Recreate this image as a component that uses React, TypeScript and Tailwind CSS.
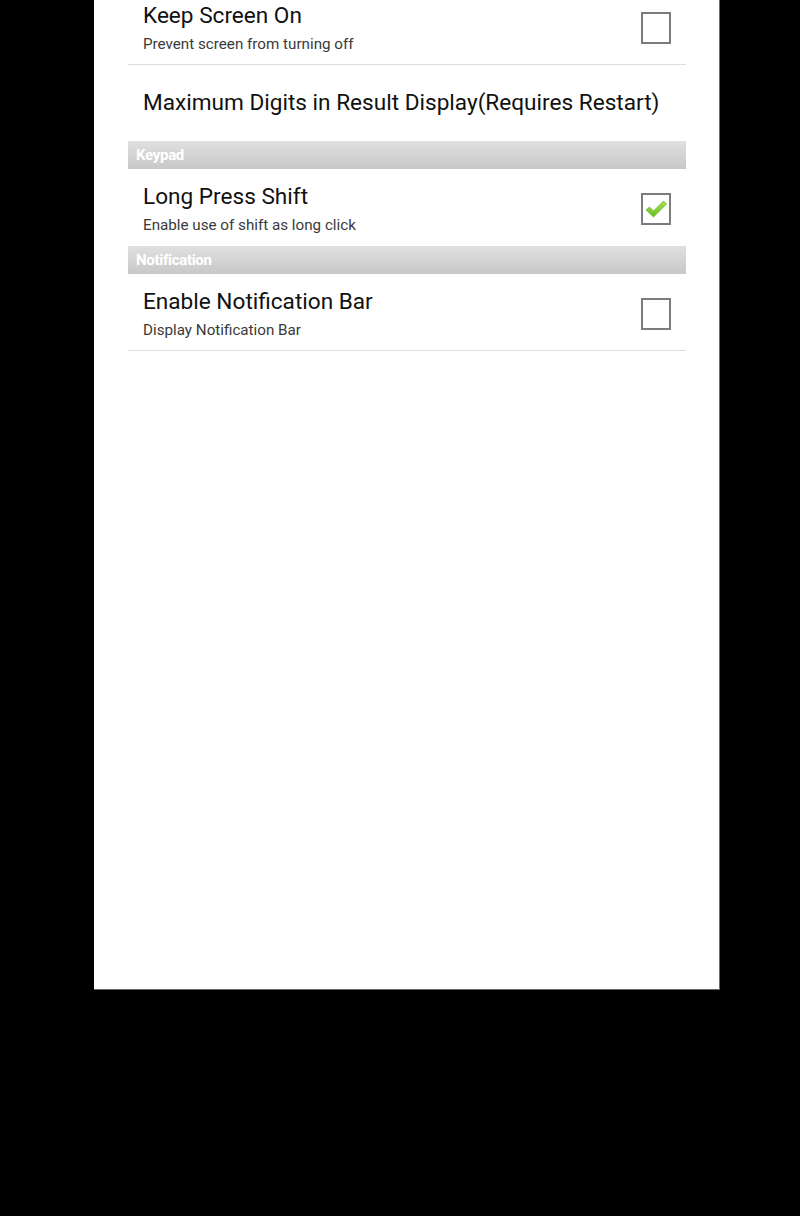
import React from "react";

type Row = {
  title: string;
  summary?: string;
  checked?: boolean;
  hasCheckbox?: boolean;
};

function Checkbox({ checked }: { checked?: boolean }) {
  return (
    <div className="flex h-[32px] w-[30px] shrink-0 items-center justify-center border-2 border-[#7c7c7c] bg-white">
      {checked ? (
        <svg width="24" height="20" viewBox="0 0 24 20">
          <defs>
            <linearGradient id="chk" x1="0" y1="0" x2="0" y2="1">
              <stop offset="0" stopColor="#a6e04a" />
              <stop offset="1" stopColor="#6cbf1f" />
            </linearGradient>
          </defs>
          <path
            d="M2 11 L5.5 8 L9.5 12 L19.5 2 L22.5 5 L9.5 18 Z"
            fill="url(#chk)"
            stroke="#5aa818"
            strokeWidth="0.6"
            strokeLinejoin="round"
          />
        </svg>
      ) : null}
    </div>
  );
}

function PrefRow({ row, divider, className }: { row: Row; divider?: boolean; className: string }) {
  return (
    <div
      className={`flex items-center pl-[15px] pr-[15px] ${className} ${divider ? "border-b border-[#dedede]" : ""}`}
    >
      <div className="flex min-w-0 flex-1 flex-col">
        <p className="text-[22.6px] leading-[28px] text-[#111]">{row.title}</p>
        {row.summary ? <p className="mt-[4px] text-[15.2px] leading-[20px] text-[#3a3a3a]">{row.summary}</p> : null}
      </div>
      {row.hasCheckbox ? <Checkbox checked={row.checked} /> : null}
    </div>
  );
}

function SectionHeader({ label }: { label: string }) {
  return (
    <div className="flex h-[28px] items-center bg-gradient-to-b from-[#e0e0e0] to-[#c8c8c8] pl-[8px]">
      <span className="text-[15px] font-bold leading-none tracking-[-0.3px] text-white">{label}</span>
    </div>
  );
}

export default function App() {
  return (
    <div
      className="h-[1216px] w-[800px] overflow-hidden bg-black"
      style={{ fontFamily: "Roboto, 'Noto Sans', sans-serif" }}
    >
      <div className="ml-[94px] h-[990px] w-[626px] overflow-hidden border-b border-r border-[#6a6a6a] bg-white">
        <div className="ml-[34px] mr-[33px] -mt-[11px]">
          <PrefRow
            row={{ title: "Keep Screen On", summary: "Prevent screen from turning off", hasCheckbox: true }}
            className="pt-[13px] pb-[10px]"
            divider
          />
          <PrefRow row={{ title: "Maximum Digits in Result Display(Requires Restart)" }} className="py-[24px]" />
          <SectionHeader label="Keypad" />
          <PrefRow
            row={{
              title: "Long Press Shift",
              summary: "Enable use of shift as long click",
              hasCheckbox: true,
              checked: true,
            }}
            className="pt-[14px] pb-[11px]"
          />
          <SectionHeader label="Notification" />
          <PrefRow
            row={{ title: "Enable Notification Bar", summary: "Display Notification Bar", hasCheckbox: true }}
            className="pt-[14px] pb-[10px]"
            divider
          />
        </div>
      </div>
    </div>
  );
}
